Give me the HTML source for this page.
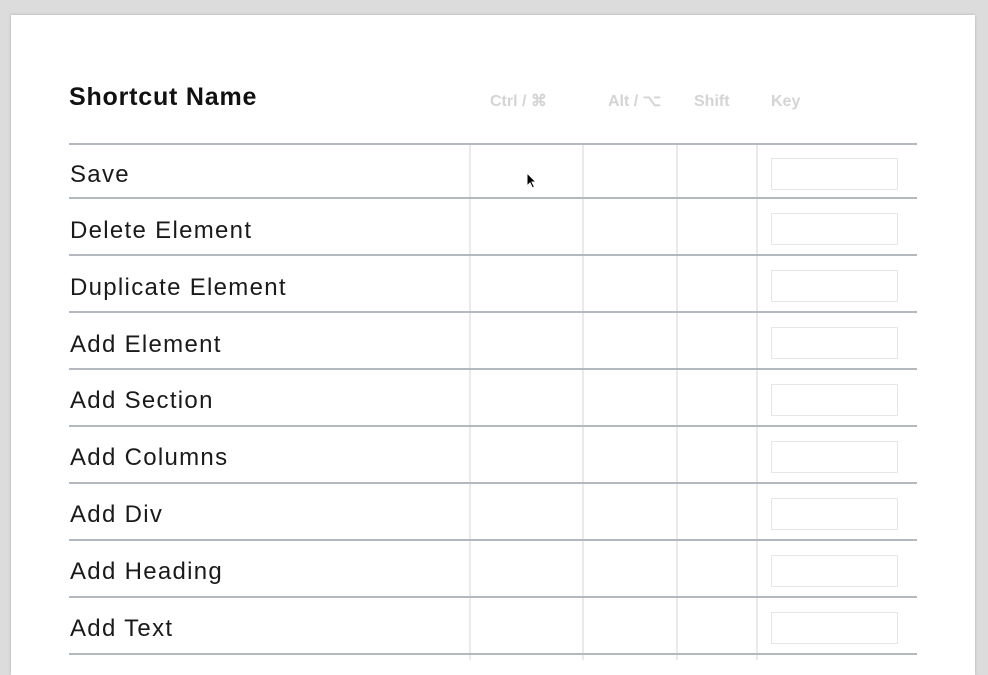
<!DOCTYPE html>
<html><head><style>
body{margin:0;width:988px;height:660px;background:#dcdcdc;overflow:hidden;font-family:"Liberation Sans",sans-serif;position:relative}
.card{position:absolute;left:11px;top:15px;width:964px;height:660px;background:#fff;box-shadow:0 0 3px rgba(0,0,0,.2)}
.h{position:absolute;left:69px;top:83px;font-size:25px;font-weight:bold;color:#111;letter-spacing:0.8px}
.ch{position:absolute;top:92px;height:20px;line-height:20px;font-size:16px;font-weight:bold;color:#d4d4d4;white-space:nowrap}
.hl{position:absolute;left:69px;width:848px;height:2px;background:#b4b8bf}
.vl{position:absolute;top:145px;width:2px;height:515px;background:#eaeaea}
.t{position:absolute;left:70px;font-size:24px;color:#1a1a1a;letter-spacing:1.3px;line-height:28px}
.k{position:absolute;left:771px;width:125px;height:30px;border:1px solid #e6e6e6}
</style></head><body>
<div class="card"></div>
<div class="h">Shortcut Name</div>
<div class="ch" style="left:490px">Ctrl / ⌘</div>
<div class="ch" style="left:608px">Alt / ⌥</div>
<div class="ch" style="left:694px">Shift</div>
<div class="ch" style="left:771px">Key</div>
<div class="vl" style="left:469px"></div><div class="vl" style="left:582px"></div><div class="vl" style="left:676px"></div><div class="vl" style="left:756px"></div>
<div class="hl" style="top:143px"></div>
<div class="hl" style="top:197px"></div>
<div class="hl" style="top:254px"></div>
<div class="hl" style="top:311px"></div>
<div class="hl" style="top:368px"></div>
<div class="hl" style="top:425px"></div>
<div class="hl" style="top:482px"></div>
<div class="hl" style="top:539px"></div>
<div class="hl" style="top:596px"></div>
<div class="hl" style="top:653px"></div>
<div class="t" style="top:161px">Save</div>
<div class="t" style="top:217px">Delete Element</div>
<div class="t" style="top:274px">Duplicate Element</div>
<div class="t" style="top:331px">Add Element</div>
<div class="t" style="top:387px">Add Section</div>
<div class="t" style="top:444px">Add Columns</div>
<div class="t" style="top:501px">Add Div</div>
<div class="t" style="top:558px">Add Heading</div>
<div class="t" style="top:615px">Add Text</div>
<div class="k" style="top:158px"></div>
<div class="k" style="top:213px"></div>
<div class="k" style="top:270px"></div>
<div class="k" style="top:327px"></div>
<div class="k" style="top:384px"></div>
<div class="k" style="top:441px"></div>
<div class="k" style="top:498px"></div>
<div class="k" style="top:555px"></div>
<div class="k" style="top:612px"></div>
<svg style="position:absolute;left:526px;top:172px" width="12" height="18" viewBox="0 0 12 18"><path d="M1 1 L1 14 L4 11 L6.5 16 L8.5 15 L6 10 L10 10 Z" fill="#000" stroke="#fff" stroke-width="1"/></svg>
</body></html>
